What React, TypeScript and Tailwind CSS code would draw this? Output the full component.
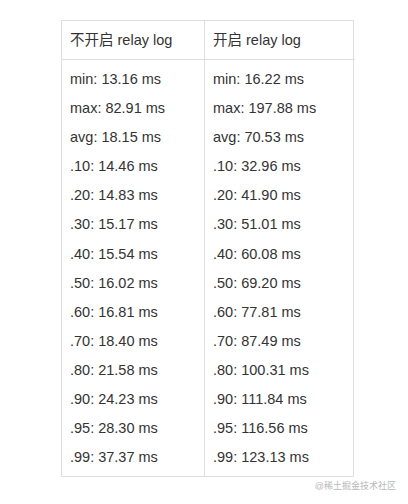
const withoutRelay = [
  "min: 13.16 ms",
  "max: 82.91 ms",
  "avg: 18.15 ms",
  ".10: 14.46 ms",
  ".20: 14.83 ms",
  ".30: 15.17 ms",
  ".40: 15.54 ms",
  ".50: 16.02 ms",
  ".60: 16.81 ms",
  ".70: 18.40 ms",
  ".80: 21.58 ms",
  ".90: 24.23 ms",
  ".95: 28.30 ms",
  ".99: 37.37 ms",
];

const withRelay = [
  "min: 16.22 ms",
  "max: 197.88 ms",
  "avg: 70.53 ms",
  ".10: 32.96 ms",
  ".20: 41.90 ms",
  ".30: 51.01 ms",
  ".40: 60.08 ms",
  ".50: 69.20 ms",
  ".60: 77.81 ms",
  ".70: 87.49 ms",
  ".80: 100.31 ms",
  ".90: 111.84 ms",
  ".95: 116.56 ms",
  ".99: 123.13 ms",
];

const font = {
  fontFamily: '"Liberation Sans", Arial, "Noto Sans CJK SC", sans-serif',
};

export default function App() {
  return (
    <div
      className="relative h-[504px] w-[408px] bg-white pl-[61px] pt-[20px] text-[#333333]"
      style={font}
    >
      <div className="grid w-[293px] grid-cols-[143px_150px] border border-[#dedede] text-[14.5px]">
        <div className="flex h-[39px] items-center border-b border-r border-[#dedede] pl-[8px] pt-[2px]">
          不开启 relay log
        </div>
        <div className="flex h-[39px] items-center border-b border-[#dedede] pl-[8px] pt-[2px]">
          开启 relay log
        </div>

        <div className="border-r border-[#dedede] pb-[4px] pl-[8px] pt-[5px] leading-[29.1px]">
          {withoutRelay.map((line) => (
            <div key={line}>{line}</div>
          ))}
        </div>
        <div className="pb-[4px] pl-[8px] pt-[5px] leading-[29.1px]">
          {withRelay.map((line) => (
            <div key={line}>{line}</div>
          ))}
        </div>
      </div>

      <p className="absolute bottom-[11px] right-[12px] text-[9px] text-[#b8b8b8]">
        @稀土掘金技术社区
      </p>
    </div>
  );
}
